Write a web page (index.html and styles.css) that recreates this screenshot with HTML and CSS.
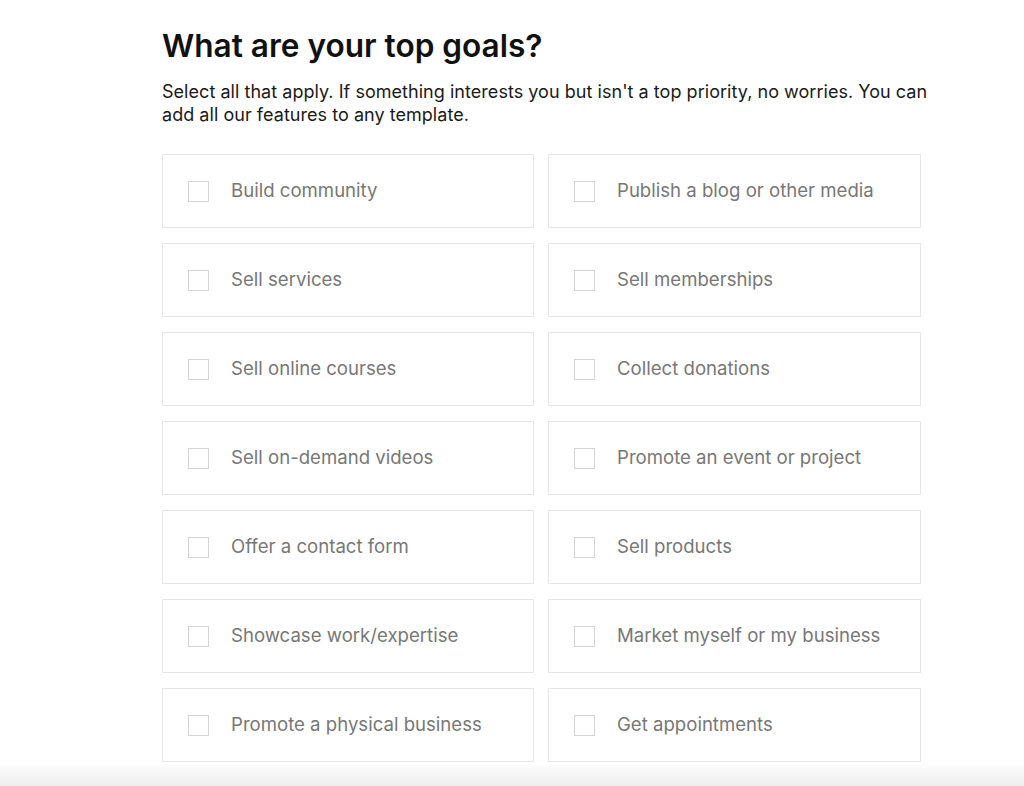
FILE: index.html
```html
<!DOCTYPE html>
<html lang="en">
<head>
<meta charset="utf-8">
<title>What are your top goals?</title>
<link rel="stylesheet" href="styles.css">
</head>
<body>
<main class="page">
  <h1 class="title">What are your top goals?</h1>
  <p class="lead">Select all that apply. If something interests you but isn't a top priority, no worries. You can add all our features to any template.</p>
  <div class="grid">
    <label class="card"><span class="box"></span><span class="label">Build community</span></label>
    <label class="card"><span class="box"></span><span class="label">Publish a blog or other media</span></label>
    <label class="card"><span class="box"></span><span class="label">Sell services</span></label>
    <label class="card"><span class="box"></span><span class="label">Sell memberships</span></label>
    <label class="card"><span class="box"></span><span class="label">Sell online courses</span></label>
    <label class="card"><span class="box"></span><span class="label">Collect donations</span></label>
    <label class="card"><span class="box"></span><span class="label">Sell on-demand videos</span></label>
    <label class="card"><span class="box"></span><span class="label">Promote an event or project</span></label>
    <label class="card"><span class="box"></span><span class="label">Offer a contact form</span></label>
    <label class="card"><span class="box"></span><span class="label">Sell products</span></label>
    <label class="card"><span class="box"></span><span class="label">Showcase work/expertise</span></label>
    <label class="card"><span class="box"></span><span class="label">Market myself or my business</span></label>
    <label class="card"><span class="box"></span><span class="label">Promote a physical business</span></label>
    <label class="card"><span class="box"></span><span class="label">Get appointments</span></label>
  </div>
</main>
<div class="fade"></div>
</body>
</html>
```
FILE: styles.css
```css
html, body {
  margin: 0;
  padding: 0;
  background: #ffffff;
}
body {
  font-family: Inter, "Liberation Sans", Arial, sans-serif;
  color: #111;
  height: 786px;
  overflow: hidden;
  display: flex;
  flex-direction: column;
}
.page {
  width: 759px;
  margin: 0 0 0 162px;
  padding-top: 27px;
  flex: 1;
}
.title {
  margin: 0;
  font-size: 31.6px;
  line-height: 38px;
  font-weight: 600;
  color: #111;
}
.lead {
  margin: 15px 0 0 0;
  font-size: 18px;
  line-height: 23px;
  letter-spacing: 0.04px;
  color: #1a1a1a;
  width: 775px;
}
.grid {
  margin-top: 28px;
  display: grid;
  grid-template-columns: 372px 373px;
  column-gap: 14px;
  row-gap: 15px;
}
.card {
  height: 72px;
  border: 1px solid #e6e6e6;
  display: flex;
  align-items: center;
  padding-left: 25px;
  box-sizing: content-box;
}
.box {
  width: 19px;
  height: 19px;
  border: 1px solid #d4d4d4;
  flex: none;
}
.label {
  margin-left: 22px;
  padding-bottom: 2px;
  font-size: 18.6px;
  color: #777;
}
.fade {
  height: 22px;
  flex: none;
  background: linear-gradient(#fdfdfd, #eeeeee);
}
```
